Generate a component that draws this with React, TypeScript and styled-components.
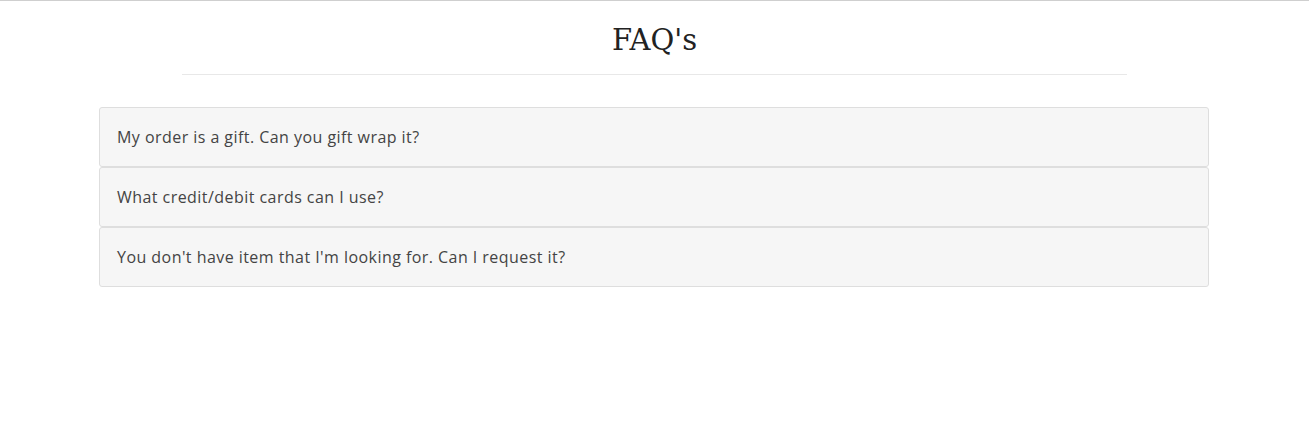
import React from "react";
import styled, { createGlobalStyle } from "styled-components";

const Global = createGlobalStyle`
  html, body { margin: 0; padding: 0; background: #fff; }
  body { font-family: "Open Sans", sans-serif; }
`;

const Page = styled.div`
  border-top: 1px solid #cfcfcf;
  display: flex;
  flex-direction: column;
  align-items: center;
`;

const Title = styled.h2`
  margin: 0;
  padding-top: 20px;
  height: 53px;
  box-sizing: border-box;
  font-family: "DejaVu Serif", serif;
  font-weight: 400;
  font-size: 29px;
  line-height: 38px;
  color: #222;
  text-align: center;
`;

const Divider = styled.hr`
  width: 945px;
  margin: 20px 0 32px;
  border: 0;
  border-top: 1px solid #e8e8e8;
`;

const List = styled.div`
  width: 1110px;
  margin-right: 1px;
  display: flex;
  flex-direction: column;
`;

const Item = styled.div`
  height: 60px;
  box-sizing: border-box;
  border: 1px solid #dedede;
  border-radius: 3px;
  background: #f6f6f6;
  display: flex;
  align-items: center;
  padding: 0 17px;
  font-size: 16px;
  color: #444;
  letter-spacing: 0.45px;
`;

const faqs = [
  "My order is a gift. Can you gift wrap it?",
  "What credit/debit cards can I use?",
  "You don't have item that I'm looking for. Can I request it?",
];

export default function App() {
  return (
    <>
      <Global />
      <Page>
        <Title>FAQ's</Title>
        <Divider />
        <List>
          {faqs.map((q) => (
            <Item key={q}>{q}</Item>
          ))}
        </List>
      </Page>
    </>
  );
}
